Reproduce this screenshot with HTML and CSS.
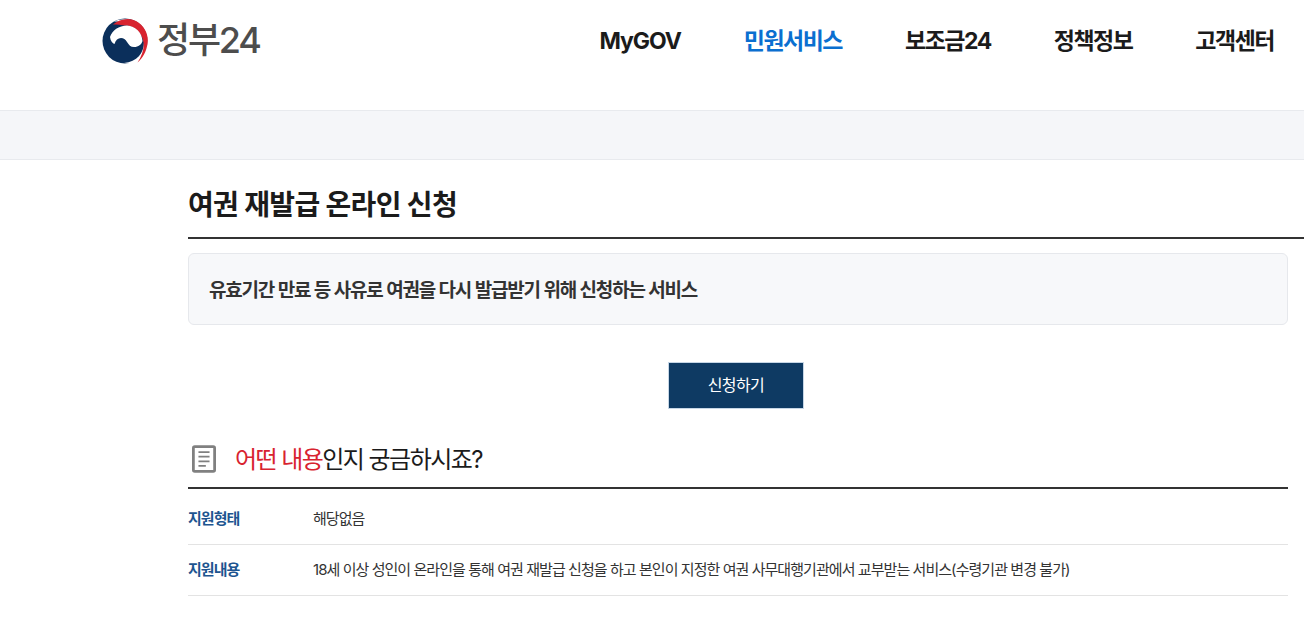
FILE: index.html
```html
<!DOCTYPE html>
<html lang="ko">
  <head>
    <meta charset="UTF-8" />
    <meta name="viewport" content="width=device-width, initial-scale=1.0" />
    <title>여권 재발급 온라인 신청</title>
    <link rel="stylesheet" href="styles.css">
  </head>
  <body>
    <header class="header">
      <a class="logo" href="#">
        <svg class="logo-mark" viewBox="0 0 46 46" width="46" height="46">
          <circle cx="23" cy="23" r="22.500" fill="#0b2f5b" />
          <path d="M12 3.500C24-2 41 3 45 19c2.500 11-3 21-11 25.500-5 1.500-9 1-12 .5 13-1 20-10 20-21C42 12 25 3 12 3.500z" fill="#fff" />
          <path d="M11 6.500C17 1 27-1 34 3c9 5 13 14 11.500 23-1.500 8-4.500 14-10 18.500C40 38 42.500 30 41.500 24 40 14 31 7.500 24 7.500c-5-.5-9-1-13-1z" fill="#d8232f" />
          <path d="M8 19C10 12.500 17 7.500 25 7.500c8.500.5 15 7 15.500 15.500-1 3.500-4 6-8.500 6-3.500 0-5-2-7-5-1.500-2.500-3.500-4-6-4-3 0-5.500 2-6.500 6C10.500 25.500 8.500 23 8 19z" fill="#fff" />
        </svg>
        <span class="logo-text">정부24</span>
      </a>
      <nav class="nav">
        <a href="#">MyGOV</a>
        <a href="#" class="active">민원서비스</a>
        <a href="#">보조금24</a>
        <a href="#">정책정보</a>
        <a href="#">고객센터</a>
      </nav>
    </header>

    <div class="band"></div>

    <main class="content">
      <h1 class="page-title">여권 재발급 온라인 신청</h1>

      <div class="summary">유효기간 만료 등 사유로 여권을 다시 발급받기 위해 신청하는 서비스</div>

      <div class="actions">
        <a href="#" class="apply-btn">신청하기</a>
      </div>

      <div class="section-head">
        <svg class="doc-icon" viewBox="0 0 26 30" width="24" height="28">
          <rect x="1.500" y="1.500" width="23" height="27" rx="1.500" fill="none" stroke="#808080" stroke-width="3" />
          <path d="M7 7.500h12M7 12.500h12M7 17.500h12M7 22.500h8" stroke="#808080" stroke-width="2" fill="none" />
        </svg>
        <h2><em>어떤 내용</em>인지 궁금하시죠?</h2>
      </div>

      <dl class="info">
        <div class="info-row">
          <dt>지원형태</dt>
          <dd>해당없음</dd>
        </div>
        <div class="info-row">
          <dt>지원내용</dt>
          <dd>18세 이상 성인이 온라인을 통해 여권 재발급 신청을 하고 본인이 지정한 여권 사무대행기관에서 교부받는 서비스(수령기관 변경 불가)</dd>
        </div>
      </dl>
    </main>
  </body>
</html>
```

FILE: styles.css
```css
* {
  margin: 0;
  padding: 0;
  box-sizing: border-box;
  font-family: "Inter", "Noto Sans CJK KR", "Noto Sans", sans-serif;
}

html,
body {
  overflow-x: hidden;
}

body {
  background-color: white;
  color: #1b1b1b;
}

a {
  color: inherit;
  text-decoration: none;
}

.header {
  display: flex;
  justify-content: space-between;
  align-items: flex-start;
  height: 110px;
  padding: 17px 30px 0 102px;
}

.logo {
  display: flex;
  align-items: center;
  gap: 9px;
  height: 47px;
}

.logo-mark {
  width: 46px;
  height: 46px;
}

.logo-text {
  color: #4d4d4d;
  font-size: 36px;
  font-weight: 500;
  letter-spacing: -2.2px;
  line-height: 47px;
}

.nav {
  display: flex;
  gap: 63px;
  height: 47px;
  align-items: center;
}

.nav a {
  font-size: 23px;
  font-weight: 700;
  letter-spacing: -1.5px;
  line-height: 44px;
  padding-top: 1px;
}

.nav a:first-child {
  letter-spacing: -1.1px;
}

.nav a.active {
  color: #0b6fd0;
}

.band {
  height: 50px;
  background-color: #f5f6f9;
  border-top: 1px solid #e8eaee;
  border-bottom: 1px solid #e8eaee;
}

.content {
  margin-left: 188px;
  width: 1100px;
}

.page-title {
  width: 1116px;
  height: 79px;
  padding-top: 24px;
  border-bottom: 2px solid #333;
  font-size: 28px;
  font-weight: 700;
  letter-spacing: -0.65px;
  line-height: 42px;
}

.summary {
  margin-top: 14px;
  height: 72px;
  padding: 0 20px;
  background-color: #f7f8fa;
  border: 1px solid #e6e8ec;
  border-radius: 6px;
  color: #333;
  font-size: 19px;
  font-weight: 600;
  letter-spacing: -1.2px;
  line-height: 74px;
}

.actions {
  display: flex;
  justify-content: center;
  margin-top: 37px;
  padding-right: 4px;
}

.apply-btn {
  width: 136px;
  height: 47px;
  background-color: #0e3a63;
  border: 1px solid #c6d6e6;
  color: white;
  font-size: 16px;
  letter-spacing: -0.6px;
  line-height: 45px;
  text-align: center;
}

.section-head {
  display: flex;
  align-items: center;
  gap: 19px;
  height: 80px;
  padding: 20px 0 0 4px;
  border-bottom: 2px solid #333;
}

.doc-icon {
  margin-top: 2px;
}

.section-head h2 {
  padding-bottom: 2px;
  font-size: 24px;
  font-weight: 400;
  letter-spacing: -1.55px;
}

.section-head em {
  color: #d8232f;
  font-style: normal;
}

.info-row {
  display: flex;
  align-items: center;
  height: 51px;
  padding-bottom: 3px;
  border-bottom: 1px solid #e3e3e3;
  font-size: 15px;
  letter-spacing: -0.94px;
}

.info-row:first-child {
  height: 56px;
  padding: 2px 0 0;
}

.info-row dt {
  width: 125px;
  color: #1d5590;
  font-weight: 700;
}

.info-row dd {
  color: #333;
}
```
